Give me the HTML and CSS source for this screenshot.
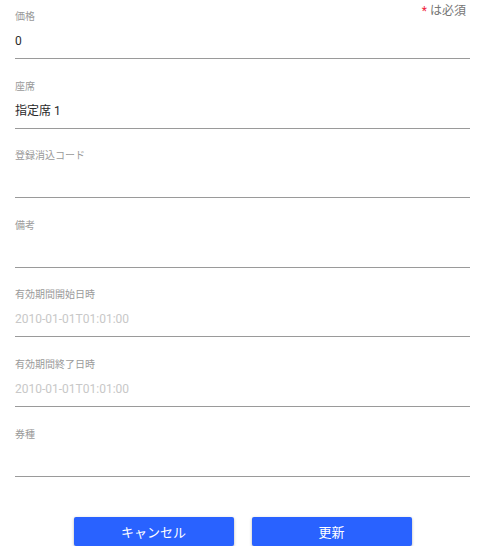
FILE: index.html
```html
<!DOCTYPE html>
<html lang="ja">
<head>
<meta charset="utf-8">
<title>編集</title>
<link rel="stylesheet" href="styles.css">
</head>
<body>
<div class="page">
  <div class="required-note"><span class="asterisk">*</span> は必須</div>
  <form class="form">
    <div class="field">
      <label class="label">価格</label>
      <div class="value">0</div>
    </div>
    <div class="field">
      <label class="label">座席</label>
      <div class="value">指定席 1</div>
    </div>
    <div class="field">
      <label class="label">登録消込コード</label>
      <div class="value"></div>
    </div>
    <div class="field">
      <label class="label">備考</label>
      <div class="value"></div>
    </div>
    <div class="field">
      <label class="label">有効期間開始日時</label>
      <div class="value placeholder">2010-01-01T01:01:00</div>
    </div>
    <div class="field">
      <label class="label">有効期間終了日時</label>
      <div class="value placeholder">2010-01-01T01:01:00</div>
    </div>
    <div class="field">
      <label class="label">券種</label>
      <div class="value"></div>
    </div>
    <div class="actions">
      <button type="button" class="btn">キャンセル</button>
      <button type="button" class="btn">更新</button>
    </div>
  </form>
</div>
</body>
</html>
```
FILE: styles.css
```css
html, body {
  margin: 0;
  padding: 0;
  background: #ffffff;
}
body {
  font-family: Roboto, "Noto Sans CJK JP", sans-serif;
  color: #333333;
}
.page {
  position: relative;
  padding: 0 9px 0 15px;
}
.required-note {
  position: absolute;
  top: 3px;
  right: 13px;
  font-size: 12px;
  line-height: 16px;
  color: #757575;
}
.asterisk {
  color: #f0243c;
}
.form {
  display: flex;
  flex-direction: column;
}
.field {
  display: flex;
  flex-direction: column;
  padding-top: 10px;
  padding-bottom: 7px;
  border-bottom: 1px solid #9a9a9a;
  margin-bottom: 10.6px;
}
.label {
  font-size: 10px;
  line-height: 14px;
  color: #9a9a9a;
}
.value {
  margin-top: 7px;
  font-size: 12px;
  line-height: 20px;
  height: 20px;
  color: #2a2a2a;
}
.placeholder {
  color: #c8c8c8;
}
.actions {
  display: flex;
  justify-content: center;
  gap: 18px;
  margin-top: 30px;
}
.btn {
  width: 160px;
  height: 29px;
  border: none;
  border-radius: 2px;
  background: #2962ff;
  color: #ffffff;
  font-family: Roboto, "Noto Sans CJK JP", sans-serif;
  font-size: 13px;
  box-shadow: 0 1px 3px rgba(0, 0, 0, 0.3);
  padding: 0;
}
```
